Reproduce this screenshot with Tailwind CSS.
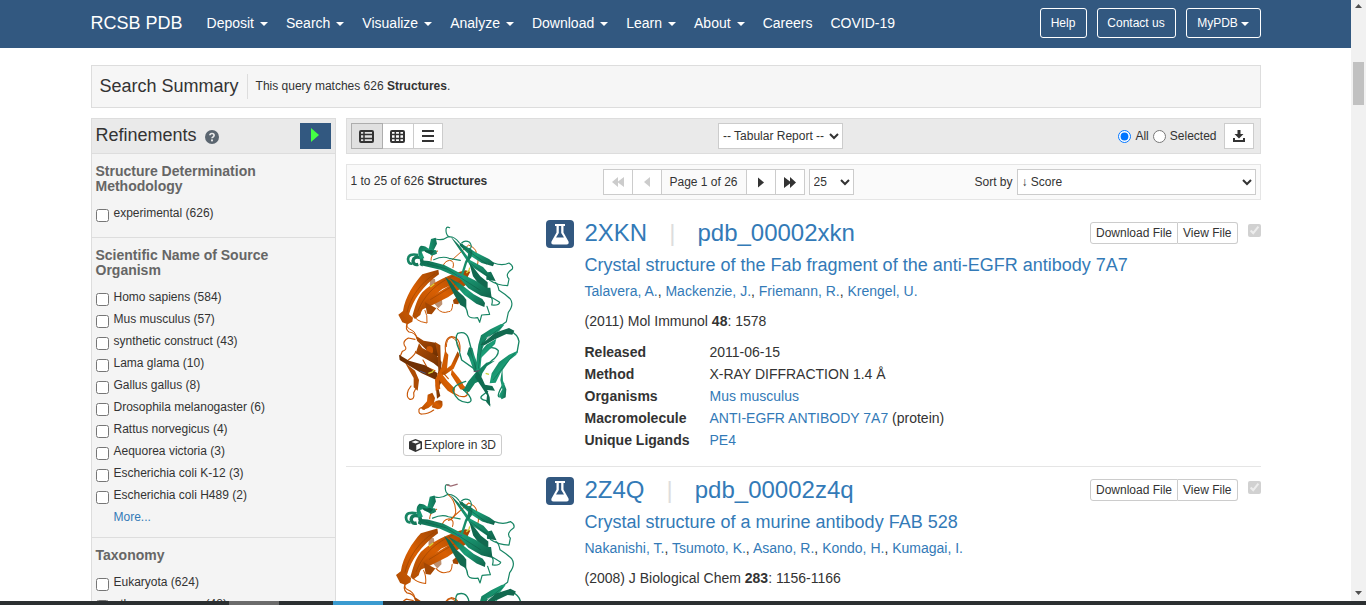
<!DOCTYPE html>
<html lang="en">
<head>
<meta charset="utf-8">
<meta name="viewport" content="width=device-width, initial-scale=1">
<title>RCSB PDB: Search Results</title>
<script src="https://cdn.jsdelivr.net/npm/@tailwindcss/browser@4"></script>
</head>
<body class="flex h-screen flex-col overflow-hidden bg-white font-['Liberation_Sans',Arial,sans-serif] text-[12px] leading-[18px] text-[#333]">

<!-- Shared drawings -->
<svg class="absolute size-0" aria-hidden="true">
  <defs>
    <linearGradient id="g" x1="0" y1="0" x2="1" y2="1"><stop offset="0" stop-color="#0f6b50"/><stop offset=".5" stop-color="#1b9e77"/><stop offset="1" stop-color="#0f6149"/></linearGradient>
    <linearGradient id="g2" x1="0" y1="0" x2="1" y2="0"><stop offset="0" stop-color="#1b9e77"/><stop offset="1" stop-color="#117055"/></linearGradient>
    <linearGradient id="o" x1="1" y1="0" x2="0" y2="1"><stop offset="0" stop-color="#9c4403"/><stop offset=".5" stop-color="#d95f02"/><stop offset="1" stop-color="#b04d02"/></linearGradient>
    <linearGradient id="o2" x1="0" y1="0" x2="1" y2="1"><stop offset="0" stop-color="#b24e04"/><stop offset="1" stop-color="#6b2e02"/></linearGradient>
  </defs>
  <symbol id="fab" viewBox="-7 15 450 600">
    <!-- upper domain, light chain -->
    <g fill="none" stroke="#cf5c08" stroke-width="3" stroke-linecap="round" stroke-linejoin="round">
      <path d="M172 108Q150 120 152 136M186 160Q190 138 208 136Q224 138 218 158M215 135L265 90Q285 98 288 112M288 115Q298 135 290 152"/>
      <path d="M103 298Q100 318 140 324Q142 300 134 286M170 280Q185 298 204 290Q216 292 217 268M80 326Q78 338 88 342Q104 348 108 362"/>
      <path d="M198 395Q198 370 214 367Q232 372 238 405" />
    </g>
    <path fill="#bd9070" d="M150 190L164 192L168 225L184 240L186 268L174 280L158 262L160 235L148 210Z"/>
    <path fill="url(#o)" d="M174 164L126 178C102 204 74 246 68 288L54 299L66 322L82 328L96 320L98 308L86 298C98 256 126 214 176 178Z"/>
    <path fill="url(#o)" d="M256 166C210 176 154 204 126 232C110 252 104 276 96 304L104 312L120 300C126 276 144 256 186 222L260 190L270 170Z"/>
    <path fill="url(#o)" d="M262 180L220 204L156 244L130 262L120 286L152 272L204 246L262 206Z"/>
    <path fill="#a34703" d="M218 256L230 246L240 252L234 268L220 266ZM134 262L168 280L154 298L140 296Z"/>
    <g fill="none" stroke="#8c3e03" stroke-width="1.5"><path d="M164 176C122 202 88 250 80 292M250 172C190 190 138 224 112 290M254 190L150 254"/></g>
    <!-- upper domain, heavy chain -->
    <g fill="none" stroke="#178564" stroke-width="3.5" stroke-linecap="round" stroke-linejoin="round">
      <path d="M208 38Q196 32 197 48Q198 62 208 66M166 72Q186 78 202 66Q220 62 236 82M244 84Q254 74 268 82Q278 96 268 102Q250 100 246 88"/>
      <path d="M160 134Q188 122 206 130L240 136M340 144Q366 154 386 144Q400 152 396 162Q372 178 386 192L382 212Q352 212 328 196"/>
      <path d="M252 272Q262 286 262 298Q266 312 292 308L298 322L304 300L328 298L320 274M332 246Q346 254 358 262Q356 272 334 270Q338 256 334 250M344 202Q352 206 356 226Q378 240 390 252Q402 268 384 292L378 320L364 330"/>
    </g>
    <path fill="none" stroke="#15795b" stroke-width="10" d="M114 148Q100 152 98 138Q100 122 122 128Q128 140 122 152"/>
    <path fill="none" stroke="#178564" stroke-width="8" d="M114 120Q84 114 83 132Q84 148 96 146"/>
    <path fill="url(#g2)" d="M152 72L166 68L170 86L160 106L166 118L154 122L140 110L146 98Z"/>
    <path fill="url(#g)" d="M122 92Q136 92 146 102L168 106L170 116Q148 122 132 108L124 110L132 130L118 132Q108 102 122 92Z"/>
    <path fill="#0e634b" d="M132 104Q142 108 152 104L162 108L154 118L134 110Z"/>
    <path fill="url(#g)" d="M236 82L286 112L326 132L342 144L338 154L304 144L270 122L240 94Z"/>
    <path fill="url(#g)" d="M210 64L236 90L270 136L308 156L322 172L332 170L346 198L318 194L318 184L270 152L240 108Z"/>
    <path fill="#11694f" d="M266 142L280 158L300 184L322 202L322 222L302 216L278 184Z"/>
    <path fill="url(#g2)" d="M266 98L276 106L274 126L260 144L248 182L242 178L254 140L262 124Z"/>
    <path fill="url(#g)" d="M118 136L146 138L192 150L234 172L288 198L316 218L330 218L334 250L302 242L264 220L238 190L180 164L128 152Z"/>
    <path fill="#12694f" d="M194 186L210 198L228 224L250 244L258 254L258 280L240 270L222 240Z"/>
    <path fill="url(#g)" d="M206 188L240 206L280 238L306 252L314 264L312 276L288 266L252 240Z"/>
    <path fill="none" stroke="#0c5a43" stroke-width="1.5" d="M140 146L200 162L300 226M240 90L320 148M270 144L330 190"/>
    <path fill="none" stroke="#d8cf35" stroke-width="4" d="M258 174L266 166L268 158M150 216L162 206"/>
    <path fill="none" stroke="#3a5fa0" stroke-width="3" d="M230 180L246 186"/>
    <!-- lower domain, light chain -->
    <g transform="translate(0 315)">
      <g fill="none" stroke="#c95706" stroke-width="3.5" stroke-linecap="round" stroke-linejoin="round">
        <path d="M80 12Q74 28 86 36Q106 38 110 56M104 58L84 54Q66 64 72 76Q84 88 66 94L60 108M106 94Q106 104 84 120M196 98Q190 54 214 50Q244 54 238 96"/>
        <path d="M106 206L100 218Q104 240 88 238Q76 230 84 210L92 198M160 270Q144 282 126 282Q114 284 116 268Q124 258 132 268M246 196Q260 206 262 220Q260 234 236 228L214 216"/>
        <path d="M128 120L140 142L164 152M204 176L190 160"/>
      </g>
      <path fill="url(#o2)" d="M108 48L130 62L166 68L174 82L174 108L156 108L136 88L110 62Z"/>
      <path fill="#ca5704" d="M140 80Q160 72 158 96L152 106Q136 104 138 88Z"/>
      <path fill="url(#o2)" d="M116 70L126 84L170 108L184 126L182 148L160 130L106 100Z"/>
      <path fill="#703003" d="M56 104L86 122L134 136L172 160L168 180L124 160L74 130L58 120Z"/>
      <path fill="#ad4b03" d="M74 128L104 152L116 180L112 212L100 202L100 174Z"/>
      <path fill="url(#o2)" d="M164 66L180 76L182 152L188 178L174 204L180 228L170 236L166 196L174 152L172 102Z"/>
      <path fill="#d05b02" d="M194 92L204 104L200 146L176 184L180 206L166 212L164 180L184 140Z"/>
      <path fill="url(#o)" d="M232 94L238 106L220 146L192 166L182 160L212 136Z"/>
      <path fill="url(#o)" d="M214 148L234 172L246 188L256 212L240 208L212 164Z"/>
      <path fill="url(#o)" d="M182 158L202 184L224 206L222 224L202 212L178 184Z"/>
      <path fill="url(#o)" d="M142 224L156 218L164 234L160 252L144 264L128 270L122 264L140 244Z"/>
      <path fill="url(#o)" d="M158 250Q172 236 186 244Q190 268 172 268L154 262Z"/>
      <path fill="none" stroke="#ddd432" stroke-width="4" d="M144 160L156 156L160 150"/>
      <path fill="none" stroke="#4a5685" stroke-width="3" d="M118 153L136 160"/>
      <!-- lower domain, heavy chain -->
      <g fill="none" stroke="#178564" stroke-width="4" stroke-linecap="round" stroke-linejoin="round">
        <path d="M238 94Q220 54 232 40Q256 32 264 54L272 84M238 98L244 120L284 148M314 88Q340 76 354 92Q354 108 334 122L310 142"/>
        <path d="M256 184Q220 194 218 212Q228 246 262 248Q280 246 266 226L248 208M390 34Q412 42 416 64L410 98M362 230Q348 234 358 212L370 190M322 214L304 228Q296 238 318 242L328 254"/>
      </g>
      <path fill="url(#g)" d="M266 82L276 84L282 106L296 144L290 160L280 152L266 112L260 102Z"/>
      <path fill="url(#g)" d="M362 12L372 14L356 34L320 52L306 88L300 148L286 158L290 104L294 74L302 46L330 28Z"/>
      <path fill="#12694f" d="M316 62L344 38L386 24L402 32L396 44L378 42L344 58L312 76L300 74Z"/>
      <path fill="url(#g)" d="M298 98L318 74L348 56L344 72L320 96L302 114Z"/>
      <path fill="#138260" d="M344 122L320 138L306 160L300 182L284 190L266 216L248 212L264 184L284 160L318 128Z"/>
      <path fill="url(#g)" d="M412 92L408 104L388 120L360 160L346 188L328 190L334 160L356 126L386 104Z"/>
      <path fill="#116b50" d="M290 150L306 176L314 194L336 198L344 212L320 210L328 232L330 260L318 246L320 226L302 198L284 172Z"/>
      <path fill="url(#g)" d="M366 144L368 182L378 208L376 232L364 238L356 226L366 208L360 180Z"/>
      <path fill="none" stroke="#0d5c45" stroke-width="1.5" d="M364 20L306 66L294 146M404 98L338 180M270 90L288 148"/>
      <path fill="none" stroke="#cbd435" stroke-width="4" d="M316 160L326 163"/>
      <path fill="none" stroke="#6a4a60" stroke-width="3" d="M280 155L298 152"/>
    </g>
  </symbol>
  <symbol id="flask" viewBox="0 0 28 28">
    <path fill="#fff" fill-rule="evenodd" d="M9 4h10v2h-1.500v6.500L22.500 21.500Q23.300 24.500 20.500 24.500H7.500Q4.700 24.500 5.500 21.500L10.500 12.500V6H9ZM12.800 6v7L10 17.500h8L15.200 13V6Z"/>
  </symbol>
</svg>

<div class="flex min-h-0 flex-1">
  <div class="min-w-0 flex-1 overflow-hidden">

    <header class="h-12 bg-[#325880] text-white">
      <div class="mx-auto flex h-[46px] max-w-[1170px] items-center">
        <a href="#" class="mr-6 text-[18px]">RCSB PDB</a>
        <nav class="flex gap-[18px] text-[14px]">
          <a href="#" class="flex items-center gap-[6px]">Deposit <svg class="mt-[2px] h-1 w-2" viewBox="0 0 8 4" fill="#fff"><path d="M0 0h8L4 4z"/></svg></a>
          <a href="#" class="flex items-center gap-[6px]">Search <svg class="mt-[2px] h-1 w-2" viewBox="0 0 8 4" fill="#fff"><path d="M0 0h8L4 4z"/></svg></a>
          <a href="#" class="flex items-center gap-[6px]">Visualize <svg class="mt-[2px] h-1 w-2" viewBox="0 0 8 4" fill="#fff"><path d="M0 0h8L4 4z"/></svg></a>
          <a href="#" class="flex items-center gap-[6px]">Analyze <svg class="mt-[2px] h-1 w-2" viewBox="0 0 8 4" fill="#fff"><path d="M0 0h8L4 4z"/></svg></a>
          <a href="#" class="flex items-center gap-[6px]">Download <svg class="mt-[2px] h-1 w-2" viewBox="0 0 8 4" fill="#fff"><path d="M0 0h8L4 4z"/></svg></a>
          <a href="#" class="flex items-center gap-[6px]">Learn <svg class="mt-[2px] h-1 w-2" viewBox="0 0 8 4" fill="#fff"><path d="M0 0h8L4 4z"/></svg></a>
          <a href="#" class="flex items-center gap-[6px]">About <svg class="mt-[2px] h-1 w-2" viewBox="0 0 8 4" fill="#fff"><path d="M0 0h8L4 4z"/></svg></a>
          <a href="#">Careers</a>
          <a href="#">COVID-19</a>
        </nav>
        <div class="ml-auto flex gap-[10px]">
          <button class="h-[30px] w-[47px] rounded-[3px] border border-white">Help</button>
          <button class="h-[30px] w-[79px] rounded-[3px] border border-white">Contact us</button>
          <button class="flex h-[30px] w-[75px] items-center justify-center gap-[3px] rounded-[3px] border border-white">MyPDB <svg class="mt-[2px] h-1 w-2" viewBox="0 0 8 4" fill="#fff"><path d="M0 0h8L4 4z"/></svg></button>
        </div>
      </div>
    </header>

    <main class="mx-auto max-w-[1170px] pt-[17px]">
      <section class="flex h-[43px] items-center border border-[#ddd] bg-[#f6f6f6] px-2">
        <h1 class="border-r border-[#ddd] pr-2 text-[18px] leading-[25px]">Search Summary</h1>
        <p class="mb-[2px] pl-2">This query matches 626 <b>Structures</b>.</p>
      </section>

      <div class="mt-[10px] flex gap-[10px]">
        <aside class="w-[245px] shrink-0 border border-[#ddd] bg-[#f4f4f4]">
          <div class="flex h-[35px] items-center border-b border-[#ddd] bg-[#eaeaea] px-1">
            <h2 class="mb-[2px] text-[18px]">Refinements</h2>
            <svg class="mt-[2px] ml-2 size-[14px]" viewBox="0 0 14 14"><circle cx="7" cy="7" r="7" fill="#5b6670"/><path d="M4.900 5.300Q5 3.500 7 3.500T9.100 5.300Q9.100 6.300 8 6.900Q7 7.400 7 8.300" fill="none" stroke="#eaeaea" stroke-width="1.700"/><circle cx="7" cy="10.400" r="1.050" fill="#eaeaea"/></svg>
            <button aria-label="Run query" class="ml-auto flex h-[26px] w-[31px] items-center justify-center bg-[#325880]"><svg class="mb-[2px] h-[14px] w-[8px]" viewBox="0 0 8 14" fill="#4f4"><path d="M0 0L8 7L0 14z"/></svg></button>
          </div>
          <section class="px-1 pt-[10px] pb-[13px]">
            <h3 class="mb-2 text-[14px] leading-[15px] font-bold text-[#666]">Structure Determination Methodology</h3>
            <label class="flex h-[22px] items-center gap-[5px]"><input type="checkbox" class="mt-1 size-[13px]"> experimental (626)</label>
          </section>
          <section class="border-t border-[#ddd] px-1 pt-[10px] pb-[9px]">
            <h3 class="mb-2 text-[14px] leading-[15px] font-bold text-[#666]">Scientific Name of Source Organism</h3>
            <label class="flex h-[22px] items-center gap-[5px]"><input type="checkbox" class="mt-1 size-[13px]"> Homo sapiens (584)</label>
            <label class="flex h-[22px] items-center gap-[5px]"><input type="checkbox" class="mt-1 size-[13px]"> Mus musculus (57)</label>
            <label class="flex h-[22px] items-center gap-[5px]"><input type="checkbox" class="mt-1 size-[13px]"> synthetic construct (43)</label>
            <label class="flex h-[22px] items-center gap-[5px]"><input type="checkbox" class="mt-1 size-[13px]"> Lama glama (10)</label>
            <label class="flex h-[22px] items-center gap-[5px]"><input type="checkbox" class="mt-1 size-[13px]"> Gallus gallus (8)</label>
            <label class="flex h-[22px] items-center gap-[5px]"><input type="checkbox" class="mt-1 size-[13px]"> Drosophila melanogaster (6)</label>
            <label class="flex h-[22px] items-center gap-[5px]"><input type="checkbox" class="mt-1 size-[13px]"> Rattus norvegicus (4)</label>
            <label class="flex h-[22px] items-center gap-[5px]"><input type="checkbox" class="mt-1 size-[13px]"> Aequorea victoria (3)</label>
            <label class="flex h-[22px] items-center gap-[5px]"><input type="checkbox" class="mt-1 size-[13px]"> Escherichia coli K-12 (3)</label>
            <label class="flex h-[22px] items-center gap-[5px]"><input type="checkbox" class="mt-1 size-[13px]"> Escherichia coli H489 (2)</label>
            <a href="#" class="ml-[18px] flex h-[22px] items-center text-[#337ab7]">More...</a>
          </section>
          <section class="border-t border-[#ddd] px-1 pt-[10px] pb-[9px]">
            <h3 class="mb-2 text-[14px] leading-[15px] font-bold text-[#666]">Taxonomy</h3>
            <label class="flex h-[22px] items-center gap-[5px]"><input type="checkbox" class="mt-1 size-[13px]"> Eukaryota (624)</label>
            <label class="flex h-[22px] items-center gap-[5px]"><input type="checkbox" class="mt-1 size-[13px]"> other sequences (48)</label>
          </section>
        </aside>

        <div class="min-w-0 flex-1">
          <div class="flex h-9 items-center justify-between border border-[#ddd] bg-[#eaeaea] px-1">
            <div class="flex">
              <button aria-label="Detailed view" class="flex h-[26px] w-8 items-center justify-center border border-[#adadad] bg-[#e0e0e0]"><svg class="h-[13px] w-[15px]" viewBox="0 0 15 13"><rect x="1" y="1" width="13" height="11" rx="1" fill="none" stroke="#333" stroke-width="2"/><path d="M1 4.500h13M1 8.500h13M5 1v11" stroke="#333" stroke-width="1.500"/></svg></button>
              <button aria-label="Gallery view" class="flex h-[26px] w-[30px] items-center justify-center border-y border-[#ccc] bg-white"><svg class="h-[13px] w-[15px]" viewBox="0 0 15 13"><rect x="1" y="1" width="13" height="11" rx="1" fill="none" stroke="#333" stroke-width="2"/><path d="M1 4.500h13M1 8.500h13M5.300 1v11M9.700 1v11" stroke="#333" stroke-width="1.500"/></svg></button>
              <button aria-label="Compact view" class="flex h-[26px] w-[30px] items-center justify-center border border-[#ccc] bg-white"><svg class="h-3 w-3" viewBox="0 0 12 12"><path d="M0 1h12M0 6h12M0 11h12" stroke="#333" stroke-width="2"/></svg></button>
            </div>
            <select aria-label="Tabular report" class="h-[26px] w-[125px] border border-[#ccc] bg-white"><option>-- Tabular Report --</option></select>
            <div class="flex items-center justify-end">
              <input id="all" type="radio" name="scope" checked class="size-[13px]"><label for="all" class="mr-1 ml-1">All</label>
              <input id="sel" type="radio" name="scope" class="size-[13px]"><label for="sel" class="mr-2 ml-1">Selected</label>
              <button aria-label="Download" class="mr-px flex h-[26px] w-[30px] items-center justify-center border border-[#ccc] bg-white"><svg class="h-3 w-3" viewBox="0 0 12 12" fill="#333"><path d="M4.500 0h3v4h3L6 8.500L1.500 4h3zM0 8h2v2h8V8h2v4H0z"/></svg></button>
            </div>
          </div>

          <div class="mt-[10px] flex h-9 items-center border border-[#e5e5e5] bg-[#fafafa] px-1">
            <p class="mb-[2px] w-[252px]">1 to 25 of 626 <b>Structures</b></p>
            <div class="flex h-[26px] divide-x divide-[#ccc] border border-[#ccc] bg-white">
              <button disabled aria-label="First page" class="flex w-[29px] items-center justify-center"><svg class="h-[10px] w-3" viewBox="0 0 12 10" fill="#ccc"><path d="M6 0v4.500L12 0v10L6 5.500V10L0 5z"/></svg></button>
              <button disabled aria-label="Previous page" class="flex w-[29px] items-center justify-center"><svg class="h-[10px] w-[6px]" viewBox="0 0 6 10" fill="#ccc"><path d="M6 0v10L0 5z"/></svg></button>
              <span class="flex w-[85px] items-center justify-center bg-[#fafafa]">Page 1 of 26</span>
              <button aria-label="Next page" class="flex w-[29px] items-center justify-center"><svg class="h-[11px] w-[6px]" viewBox="0 0 6 10" fill="#333"><path d="M0 0v10L6 5z"/></svg></button>
              <button aria-label="Last page" class="flex w-[28px] items-center justify-center"><svg class="h-[11px] w-3" viewBox="0 0 12 11" fill="#333"><path d="M6 0v4.500L0 0v11L6 6.500V11L12 5.500z"/></svg></button>
            </div>
            <select aria-label="Results per page" class="ml-1 h-[26px] w-[45px] border border-[#ccc] bg-white"><option>25</option></select>
            <div class="flex flex-1 items-center justify-end">
              <label for="sort" class="mr-1">Sort by</label>
              <select id="sort" class="h-[26px] w-[239px] border border-[#ccc] bg-white"><option>↓ Score</option></select>
            </div>
          </div>

          <article class="mt-[10px] flex border-b border-[#e5e5e5] py-[10px]">
            <div class="flex w-[200px] shrink-0 flex-col items-center pl-[14px]">
              <svg class="h-[200px] w-[150px]" role="img" aria-label="2XKN structure"><use href="#fab"/></svg>
              <button class="mt-[14px] flex h-[22px] items-center gap-[2px] rounded-[3px] border border-[#ccc] px-[5px]"><svg class="size-[13px]" viewBox="0 0 13 13"><path fill="#333" d="M6.500 0L13 2.500v7.500L6.500 13L0 10V2.500z"/><path fill="#fff" d="M6.500 1.500L10.500 3L6.500 4.500L2.500 3zM7.300 6L11.500 4.300v4.800L7.300 11.200z"/></svg>Explore in 3D</button>
            </div>
            <svg class="size-7 shrink-0 rounded bg-[#325880]" role="img" aria-label="Experimental"><use href="#flask"/></svg>
            <div class="min-w-0 flex-1 pl-[11px] text-[14px] leading-5">
              <h3 class="flex gap-[22px] text-[24px] leading-[26px] text-[#337ab7]"><a href="#">2XKN</a><span class="text-[#ddd]">|</span><a href="#">pdb_00002xkn</a></h3>
              <h4 class="mt-[9px] text-[18px] leading-5 whitespace-nowrap text-[#337ab7]"><a href="#">Crystal structure of the Fab fragment of the anti-EGFR antibody 7A7</a></h4>
              <p class="mt-[6px]"><a href="#" class="text-[#337ab7]">Talavera, A.</a>, <a href="#" class="text-[#337ab7]">Mackenzie, J.</a>, <a href="#" class="text-[#337ab7]">Friemann, R.</a>, <a href="#" class="text-[#337ab7]">Krengel, U.</a></p>
              <p class="mt-[10px]">(2011) Mol Immunol <b>48</b>: 1578</p>
              <table class="mt-[10px] leading-[22px]">
                <tr><th class="w-[125px] text-left">Released</th><td>2011-06-15</td></tr>
                <tr><th class="text-left">Method</th><td>X-RAY DIFFRACTION 1.4 Å</td></tr>
                <tr><th class="text-left">Organisms</th><td><a href="#" class="text-[#337ab7]">Mus musculus</a></td></tr>
                <tr><th class="text-left">Macromolecule</th><td><a href="#" class="text-[#337ab7]">ANTI-EGFR ANTIBODY 7A7</a> (protein)</td></tr>
                <tr><th class="text-left">Unique Ligands</th><td><a href="#" class="text-[#337ab7]">PE4</a></td></tr>
              </table>
            </div>
            <div class="flex shrink-0 items-start pt-[2px]">
              <button class="h-[22px] rounded-l-[3px] border border-[#ccc] px-[5px]">Download File</button>
              <button class="h-[22px] rounded-r-[3px] border border-l-0 border-[#ccc] px-[5px]">View File</button>
              <input type="checkbox" checked disabled aria-label="Select 2XKN" class="mt-[2px] ml-[10px] size-[13px]">
            </div>
          </article>

          <article class="flex py-[10px]">
            <div class="flex w-[200px] shrink-0 flex-col items-center pl-[14px]">
              <svg class="h-[207px] w-[155px]" viewBox="0 0 450 600" role="img" aria-label="2Z4Q structure">
                <use href="#fab" width="450" height="600"/>
                <path d="M208 22L220 26L240 20" fill="none" stroke="#9c6a72" stroke-width="4"/>
                <path d="M212 50Q236 70 234 104Q228 122 212 126" fill="none" stroke="#cf5c08" stroke-width="3"/>
              </svg>
            </div>
            <svg class="size-7 shrink-0 rounded bg-[#325880]" role="img" aria-label="Experimental"><use href="#flask"/></svg>
            <div class="min-w-0 flex-1 pl-[11px] text-[14px] leading-5">
              <h3 class="flex gap-[22px] text-[24px] leading-[26px] text-[#337ab7]"><a href="#">2Z4Q</a><span class="text-[#ddd]">|</span><a href="#">pdb_00002z4q</a></h3>
              <h4 class="mt-[9px] text-[18px] leading-5 whitespace-nowrap text-[#337ab7]"><a href="#">Crystal structure of a murine antibody FAB 528</a></h4>
              <p class="mt-[6px]"><a href="#" class="text-[#337ab7]">Nakanishi, T.</a>, <a href="#" class="text-[#337ab7]">Tsumoto, K.</a>, <a href="#" class="text-[#337ab7]">Asano, R.</a>, <a href="#" class="text-[#337ab7]">Kondo, H.</a>, <a href="#" class="text-[#337ab7]">Kumagai, I.</a></p>
              <p class="mt-[10px]">(2008) J Biological Chem <b>283</b>: 1156-1166</p>
            </div>
            <div class="flex shrink-0 items-start pt-[2px]">
              <button class="h-[22px] rounded-l-[3px] border border-[#ccc] px-[5px]">Download File</button>
              <button class="h-[22px] rounded-r-[3px] border border-l-0 border-[#ccc] px-[5px]">View File</button>
              <input type="checkbox" checked disabled aria-label="Select 2Z4Q" class="mt-[2px] ml-[10px] size-[13px]">
            </div>
          </article>
        </div>
      </div>
    </main>
  </div>

  <!-- Scrollbar -->
  <div class="flex w-[15px] shrink-0 flex-col items-center bg-[#f1f1f1] py-1" aria-hidden="true">
    <svg class="h-1 w-[7px]" viewBox="0 0 7 4" fill="#505050"><path d="M0 4h7L3.500 0z"/></svg>
    <div class="mt-[54px] h-[43px] w-[11px] bg-[#c1c1c1]"></div>
    <svg class="mt-auto mb-[2px] h-1 w-[7px]" viewBox="0 0 7 4" fill="#505050"><path d="M0 0h7L3.500 4z"/></svg>
  </div>
</div>

<!-- Desktop panel edge -->
<div class="flex h-1 shrink-0 bg-[#2b2f31] pl-[229px]" aria-hidden="true">
  <div class="w-[50px] bg-[#6b6b6b]"></div>
  <div class="ml-[54px] w-[50px] bg-[#3a9bd0]"></div>
</div>
</body>
</html>
